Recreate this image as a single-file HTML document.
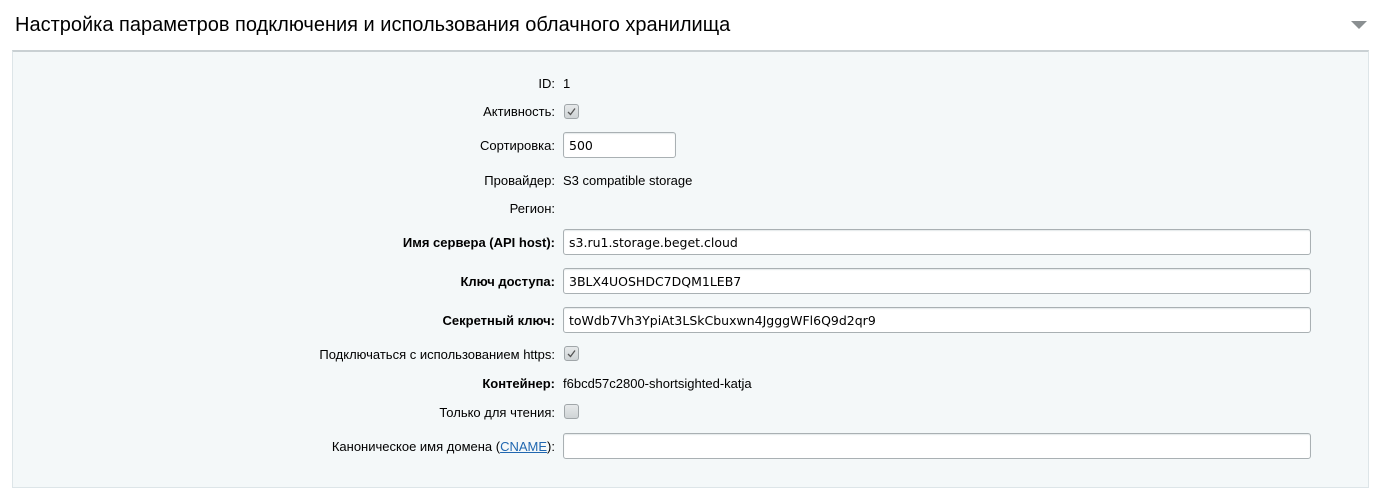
<!DOCTYPE html>
<html><head><meta charset="utf-8"><style>
body{margin:0;width:1387px;height:487px;background:#fff;position:relative;overflow:hidden;font-family:"Liberation Sans",Arial,sans-serif;color:#000}
.title{position:absolute;left:15px;top:14px;font-size:20px;color:#000}
.arrow{position:absolute;left:1351px;top:21px;width:0;height:0;border-left:8px solid transparent;border-right:8px solid transparent;border-top:8px solid #8a8f91}
.panel{position:absolute;left:12px;top:50px;width:1355px;height:435px;background:#f4f8f9;border:1px solid #dde5e8;border-top:2px solid #c9d0d3}
.l{position:absolute;right:832px;font-size:13px;color:#000;line-height:16px;white-space:nowrap}
.b{font-weight:bold}
.v{position:absolute;left:563px;font-size:13px;line-height:16px;white-space:nowrap}
.in{position:absolute;left:563px;height:24px;background:#fff;border:1px solid #a9b0b3;border-radius:3px;box-shadow:inset 0 1px 1px #e4e8ea;font-family:"DejaVu Sans",sans-serif;font-size:12.5px;line-height:25px;padding-left:5px;box-sizing:content-box;width:741px}
.cb{position:absolute;left:564px;width:13px;height:13px;border:1px solid #a0a6a9;border-radius:3px;background:linear-gradient(#e6e9ea,#cfd4d6)}
.cb svg{position:absolute;left:1px;top:1px}
a{color:#2067b0}
</style></head><body>
<div class="title">Настройка параметров подключения и использования облачного хранилища</div>
<div class="arrow"></div>
<div class="panel"></div>
<div class="l" style="top:76px">ID:</div><div class="v" style="top:76px">1</div>
<div class="l" style="top:104px">Активность:</div><div class="cb" style="top:104px"><svg width="11" height="11"><path d="M2 6 L4.5 8.5 L9 2.5" stroke="#555" stroke-width="1.3" fill="none"/></svg></div>
<div class="l" style="top:138px">Сортировка:</div><div class="in" style="top:132px;width:106px">500</div>
<div class="l" style="top:173px">Провайдер:</div><div class="v" style="top:173px">S3 compatible storage</div>
<div class="l" style="top:201px">Регион:</div>
<div class="l b" style="top:235px">Имя сервера (API host):</div><div class="in" style="top:229px">s3.ru1.storage.beget.cloud</div>
<div class="l b" style="top:274px">Ключ доступа:</div><div class="in" style="top:268px">3BLX4UOSHDC7DQM1LEB7</div>
<div class="l b" style="top:313px">Секретный ключ:</div><div class="in" style="top:307px">toWdb7Vh3YpiAt3LSkCbuxwn4JgggWFl6Q9d2qr9</div>
<div class="l" style="top:347px">Подключаться с использованием https:</div><div class="cb" style="top:346px"><svg width="11" height="11"><path d="M2 6 L4.5 8.5 L9 2.5" stroke="#555" stroke-width="1.3" fill="none"/></svg></div>
<div class="l b" style="top:376px">Контейнер:</div><div class="v" style="top:376px">f6bcd57c2800-shortsighted-katja</div>
<div class="l" style="top:405px">Только для чтения:</div><div class="cb" style="top:404px"></div>
<div class="l" style="top:439px">Каноническое имя домена (<a href="#">CNAME</a>):</div><div class="in" style="top:433px"></div>
</body></html>
